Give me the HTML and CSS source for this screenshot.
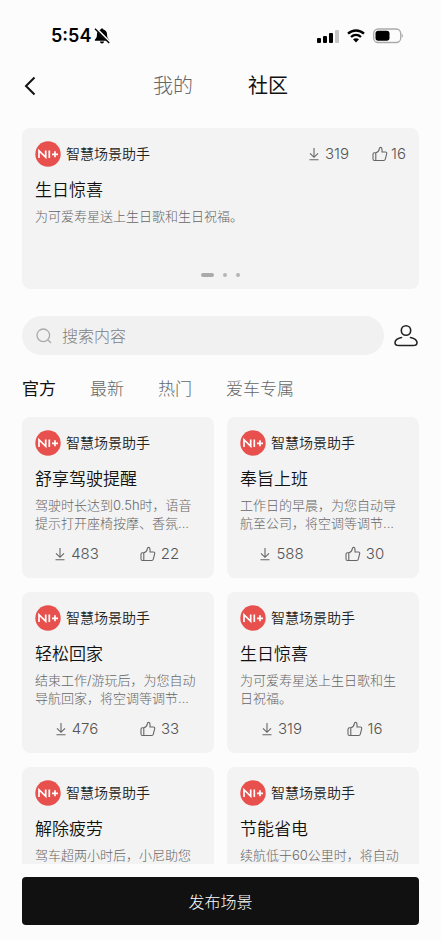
FILE: index.html
```html
<!DOCTYPE html>
<html lang="zh-CN">
<head>
<meta charset="utf-8">
<meta name="viewport" content="width=device-width, initial-scale=1">
<title>社区</title>
<link rel="stylesheet" href="styles.css">
</head>
<body>
<svg class="sprite" aria-hidden="true">
  <symbol id="download" viewBox="0 0 12 14"><path d="M6 1v9M2 6.300l4 4 4-4M1.500 12.700h9"/></symbol>
  <symbol id="like" viewBox="0 0 16 16"><path d="M3.800 6.800H2.500A1.500 1.500 0 0 0 1 8.300v4.700a1.500 1.500 0 0 0 1.500 1.500h1.300M3.800 6.800v7.700h7.900a1.700 1.700 0 0 0 1.600-1.300l1.400-5.500A1.300 1.300 0 0 0 13.500 6H10V3.300C10 .9 7.500.7 7.300 2.900 7.100 4.700 5.800 6.300 3.800 6.800z"/></symbol>
  <symbol id="avatar" viewBox="0 0 26 26"><circle cx="13" cy="13" r="12.700" fill="#e7504c"/><path d="M4 17V9.700L10.700 16.300V9.500M14.300 9.500v7.500M17 13.300h6M20 10.300v6" fill="none" stroke="#fff" stroke-width="1.700"/></symbol>
</svg>

<div class="status">
  <div class="status-left">
    <span class="time">5:54</span>
    <svg width="16" height="16" viewBox="0 0 16 16" aria-hidden="true"><path d="M8 .5c.8 0 1.300.5 1.400 1.100 2.300.7 3.600 2.300 3.600 4.500 0 3.200.7 4.200 2 5.300.4.400.2 1.300-.4 1.300H1.400c-.6 0-.8-.9-.4-1.300C2.300 10.300 3 9.300 3 6.100c0-2.200 1.300-3.800 3.600-4.500C6.700 1 7.200.5 8 .5zM5.900 13.500h4.200c-.2 1.300-1 2-2.100 2s-1.900-.7-2.100-2z"/><path d="m1.500 0 14.500 14.500" stroke="#fcfcfc" stroke-width="2.600"/><path d="m1 .8 14.200 14.200" stroke="#000" stroke-width="1.400"/></svg>
  </div>
  <div class="status-right">
    <svg width="22" height="14" viewBox="0 0 22 14" aria-hidden="true"><rect y="9" width="4" height="5" rx="1"/><rect x="6" y="7" width="4" height="7" rx="1"/><rect x="12" y="4" width="4" height="10" rx="1"/><rect x="18" y="1" width="4" height="13" rx="1" fill="#c6c6c6"/></svg>
    <svg width="18" height="14" viewBox="0 0 18 14" aria-hidden="true"><path d="M1 4.700c4.500-4.300 11.500-4.300 16 0M4 8c2.900-2.700 7.100-2.700 10 0" fill="none" stroke="#000" stroke-width="2.300"/><path d="M6 10.300c1.800-1.500 4.200-1.500 6 0l-3 3.200z"/></svg>
    <svg width="30" height="16" viewBox="0 0 30 16" aria-hidden="true"><rect x=".7" y="1" width="27" height="13.500" rx="4.500" fill="none" stroke="#aaa" stroke-width="1.300"/><rect x="2.500" y="2.800" width="14" height="10" rx="2.800"/><path d="M28.800 5.700c1.300.7 1.300 3.300 0 4z" fill="#999"/></svg>
  </div>
</div>

<header class="nav">
  <button class="back" aria-label="返回"><svg width="12" height="20" viewBox="0 0 12 20"><path d="M10.500 1.500 2 10l8.500 8.500"/></svg></button>
  <nav class="nav-tabs"><a href="#mine">我的</a><a class="current" href="#community">社区</a></nav>
</header>

<main class="content">
  <section class="card featured">
    <div class="top">
      <div class="author"><svg class="avatar"><use href="#avatar"/></svg><span>智慧场景助手</span></div>
      <div class="top-stats">
        <span class="stat"><svg class="i-down"><use href="#download"/></svg>319</span>
        <span class="stat tight"><svg class="i-like"><use href="#like"/></svg>16</span>
      </div>
    </div>
    <h2>生日惊喜</h2>
    <p>为可爱寿星送上生日歌和生日祝福。</p>
    <div class="dots"><i class="on"></i><i></i><i></i></div>
  </section>

  <div class="search-row">
    <label class="search">
      <svg width="16" height="16" viewBox="0 0 16 16" aria-hidden="true"><circle cx="7.300" cy="7.300" r="6.300"/><path d="m12 12 3 3"/></svg>
      <input type="search" placeholder="搜索内容" aria-label="搜索内容">
    </label>
    <button class="profile" aria-label="个人中心"><svg width="26" height="24" viewBox="0 0 26 24"><circle cx="13" cy="6.500" r="4.700"/><path d="M8.500 13.500C4.500 14.300 2 16.300 2 18.700c0 2.200 1.500 2.800 4 2.800h14c2.500 0 4-.6 4-2.800 0-2.400-2.500-4.400-6.500-5.200"/></svg></button>
  </div>

  <nav class="filters"><a class="current" href="#official">官方</a><a href="#latest">最新</a><a href="#hot">热门</a><a href="#exclusive">爱车专属</a></nav>

  <section class="grid">
    <article class="card">
      <div class="author"><svg class="avatar"><use href="#avatar"/></svg><span>智慧场景助手</span></div>
      <h2>舒享驾驶提醒</h2>
      <p>驾驶时长达到0.5h时，语音提示打开座椅按摩、香氛...</p>
      <div class="stats"><span class="stat"><svg class="i-down"><use href="#download"/></svg>483</span><span class="stat"><svg class="i-like"><use href="#like"/></svg>22</span></div>
    </article>
    <article class="card">
      <div class="author"><svg class="avatar"><use href="#avatar"/></svg><span>智慧场景助手</span></div>
      <h2>奉旨上班</h2>
      <p>工作日的早晨，为您自动导航至公司，将空调等调节...</p>
      <div class="stats"><span class="stat"><svg class="i-down"><use href="#download"/></svg>588</span><span class="stat"><svg class="i-like"><use href="#like"/></svg>30</span></div>
    </article>
    <article class="card">
      <div class="author"><svg class="avatar"><use href="#avatar"/></svg><span>智慧场景助手</span></div>
      <h2>轻松回家</h2>
      <p>结束工作/游玩后，为您自动导航回家，将空调等调节...</p>
      <div class="stats"><span class="stat"><svg class="i-down"><use href="#download"/></svg>476</span><span class="stat"><svg class="i-like"><use href="#like"/></svg>33</span></div>
    </article>
    <article class="card">
      <div class="author"><svg class="avatar"><use href="#avatar"/></svg><span>智慧场景助手</span></div>
      <h2>生日惊喜</h2>
      <p>为可爱寿星送上生日歌和生日祝福。</p>
      <div class="stats"><span class="stat"><svg class="i-down"><use href="#download"/></svg>319</span><span class="stat"><svg class="i-like"><use href="#like"/></svg>16</span></div>
    </article>
    <article class="card">
      <div class="author"><svg class="avatar"><use href="#avatar"/></svg><span>智慧场景助手</span></div>
      <h2>解除疲劳</h2>
      <p>驾车超两小时后，小尼助您</p>
    </article>
    <article class="card">
      <div class="author"><svg class="avatar"><use href="#avatar"/></svg><span>智慧场景助手</span></div>
      <h2>节能省电</h2>
      <p>续航低于60公里时，将自动</p>
    </article>
  </section>
</main>

<footer class="footer"><button class="publish">发布场景</button></footer>
</body>
</html>
```
FILE: styles.css
```css
* { box-sizing: border-box; }

body {
  margin: 0;
  height: 100vh;
  display: flex;
  flex-direction: column;
  background: #fcfcfc;
  color: #222;
  font-family: Inter, "Noto Sans CJK SC", sans-serif;
  font-weight: 300;
}

button {
  border: 0;
  padding: 0;
  background: none;
  font: inherit;
  color: inherit;
}

a { color: #666; text-decoration: none; }
svg { display: block; flex: none; }
h2, p { margin: 0; }
.sprite { position: absolute; width: 0; height: 0; }

.status {
  flex: none;
  display: flex;
  justify-content: space-between;
  align-items: center;
  height: 56px;
  padding: 16px 38px 0 51px;
}
.status-left { display: flex; align-items: center; gap: 3px; }
.status-right { display: flex; align-items: center; gap: 8px; }
.time { font-size: 18px; line-height: 24px; font-weight: 600; color: #000; }

.nav {
  flex: none;
  display: grid;
  grid-template-columns: 1fr auto 1fr;
  align-items: center;
  height: 60px;
  padding: 0 22px;
}
.back { width: 24px; height: 24px; padding: 2px; }
.back svg { fill: none; stroke: #111; stroke-width: 2; }
.nav-tabs { display: flex; gap: 55px; font-size: 20px; line-height: 28px; }
.nav-tabs .current { color: #111; font-weight: 400; }

.content {
  flex: 1;
  min-height: 0;
  overflow: hidden;
  margin: 12px 22px 0;
}

.card {
  min-width: 0;
  min-height: 161px;
  padding: 12px 13px;
  border-radius: 8px;
  background: #f3f3f3;
}
.featured { display: flex; flex-direction: column; }
.top { display: flex; justify-content: space-between; align-items: center; }
.top-stats { display: flex; gap: 23px; }
.author {
  display: flex;
  align-items: center;
  gap: 5px;
  height: 28px;
  font-size: 14px;
  line-height: 20px;
  font-weight: 350;
}
.avatar { width: 26px; height: 26px; }
h2 {
  margin-top: 10px;
  font-size: 17px;
  line-height: 24px;
  font-weight: 350;
  color: #111;
}
p {
  margin-top: 5px;
  font-size: 13px;
  line-height: 18px;
  color: #666;
}
.stats {
  display: grid;
  grid-template-columns: 1fr 1fr;
  justify-items: center;
  margin-top: 12px;
}
.stat {
  display: flex;
  align-items: center;
  gap: 5px;
  font-size: 15px;
  line-height: 20px;
  color: #555;
}
.tight { gap: 3px; }
.i-down, .i-like { fill: none; stroke: #666; stroke-width: 1.1px; }
.i-down { width: 12px; height: 14px; }
.i-like { width: 16px; height: 16px; }

.dots { display: flex; justify-content: center; align-items: center; gap: 9px; margin-top: auto; height: 4px; }
.dots i { width: 4px; height: 4px; border-radius: 2px; background: #b5b5b5; }
.dots .on { width: 13px; background: #aaa; }

.search-row { display: flex; align-items: center; gap: 9px; margin-top: 27px; }
.search {
  flex: 1;
  min-width: 0;
  display: flex;
  align-items: center;
  gap: 10px;
  height: 39px;
  padding: 0 14px;
  border-radius: 20px;
  background: #f1f1f1;
}
.search svg { fill: none; stroke: #aaa; stroke-width: 1.3; }
.search input {
  flex: 1;
  min-width: 0;
  border: 0;
  padding: 0;
  outline: 0;
  background: none;
  font: inherit;
  font-size: 16px;
  line-height: 24px;
}
.search input::placeholder { color: #808080; }
.profile svg { fill: none; stroke: #222; stroke-width: 1.6; stroke-linecap: round; }

.filters {
  display: flex;
  gap: 34px;
  margin-top: 21px;
  font-size: 17px;
  line-height: 26px;
}
.filters .current { color: #111; font-weight: 400; }

.grid {
  display: grid;
  grid-template-columns: repeat(2, minmax(0, 1fr));
  gap: 14px 13px;
  margin-top: 15px;
}

.footer { flex: none; padding: 13px 22px 15px; }
.publish {
  display: block;
  width: 100%;
  height: 48px;
  border-radius: 4px;
  background: #111;
  color: #fff;
  font-size: 16px;
}
```
